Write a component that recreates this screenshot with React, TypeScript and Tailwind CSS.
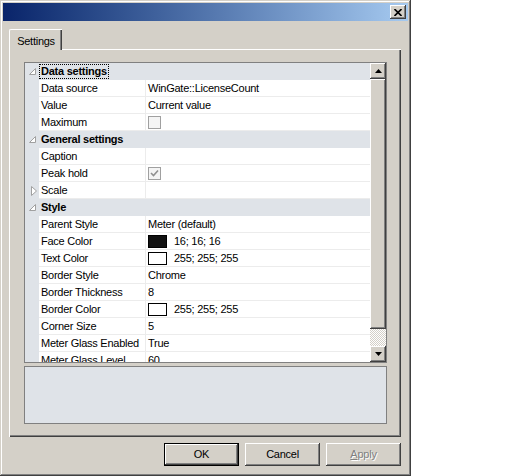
import React from 'react';

type Row =
    | { kind: 'cat'; label: string; focused?: boolean }
    | { kind: 'collapsed'; label: string }
    | { kind: 'prop'; name: string; value?: string; swatch?: string; check?: boolean };

const ROWS: Row[] = [
    { kind: 'cat', label: 'Data settings', focused: true },
    { kind: 'prop', name: 'Data source', value: 'WinGate::LicenseCount' },
    { kind: 'prop', name: 'Value', value: 'Current value' },
    { kind: 'prop', name: 'Maximum', check: false },
    { kind: 'cat', label: 'General settings' },
    { kind: 'prop', name: 'Caption', value: '' },
    { kind: 'prop', name: 'Peak hold', check: true },
    { kind: 'collapsed', label: 'Scale' },
    { kind: 'cat', label: 'Style' },
    { kind: 'prop', name: 'Parent Style', value: 'Meter (default)' },
    { kind: 'prop', name: 'Face Color', value: '16; 16; 16', swatch: '#101010' },
    { kind: 'prop', name: 'Text Color', value: '255; 255; 255', swatch: '#ffffff' },
    { kind: 'prop', name: 'Border Style', value: 'Chrome' },
    { kind: 'prop', name: 'Border Thickness', value: '8' },
    { kind: 'prop', name: 'Border Color', value: '255; 255; 255', swatch: '#ffffff' },
    { kind: 'prop', name: 'Corner Size', value: '5' },
    { kind: 'prop', name: 'Meter Glass Enabled', value: 'True' },
    { kind: 'prop', name: 'Meter Glass Level', value: '60' },
];

// classic win2k raised edge
const raised =
    'shadow-[inset_-1px_-1px_#404040,inset_1px_1px_#ffffff,inset_-2px_-2px_#808080,inset_2px_2px_#d4d0c8]';

const ExpandedGlyph = () => (
    <svg width="7" height="7" viewBox="0 0 7 7" className="ml-[4px]">
        <path d="M6.5 0.5 L6.5 6.5 L0.5 6.5 Z" fill="white" stroke="#a0a0a0" strokeWidth="1" />
    </svg>
);

const CollapsedGlyph = () => (
    <svg width="6" height="10" viewBox="0 0 6 10" className="ml-[6px]">
        <path d="M0.5 0.5 L5.5 5 L0.5 9.5 Z" fill="white" stroke="#a0a0a0" strokeWidth="1" />
    </svg>
);

const Checkbox = ({ checked }: { checked: boolean }) => (
    <div className="w-[13px] h-[13px] border border-[#a0a0a0] bg-[#f4f4f4] flex items-center justify-center">
        {checked && (
            <svg width="9" height="9" viewBox="0 0 9 9">
                <path d="M1 4 L3.5 6.5 L8 1.5" fill="none" stroke="#909090" strokeWidth="1.6" />
            </svg>
        )}
    </div>
);

const GridRow = ({ row }: { row: Row }) => {
    if (row.kind === 'cat' || row.kind === 'collapsed') {
        const isCat = row.kind === 'cat';
        return (
            <div className={`flex h-[17px] shrink-0 ${isCat ? 'bg-[#dfe3e8]' : 'bg-white'}`}>
                <div className="w-[14px] shrink-0 bg-[#dfe3e8] flex items-center">
                    {isCat ? <ExpandedGlyph /> : <CollapsedGlyph />}
                </div>
                {isCat ? (
                    <div className="flex items-center">
                        <span
                            className={`px-[2px] leading-[15px] font-bold ${
                                row.focused ? 'outline outline-1 outline-dotted outline-black -outline-offset-1' : ''
                            }`}
                        >
                            {row.label}
                        </span>
                    </div>
                ) : (
                    <>
                        <div className="w-[107px] shrink-0 border-r border-b border-[#ececec] pl-[2px] leading-[16px]">
                            {row.label}
                        </div>
                        <div className="flex-1 border-b border-[#ececec]" />
                    </>
                )}
            </div>
        );
    }
    return (
        <div className="flex h-[17px] shrink-0 bg-white">
            <div className="w-[14px] shrink-0 bg-[#dfe3e8]" />
            <div className="w-[107px] shrink-0 border-r border-b border-[#ececec] pl-[2px] leading-[16px] whitespace-nowrap overflow-hidden">
                {row.name}
            </div>
            <div className="flex-1 border-b border-[#ececec] pl-[2px] flex items-center gap-[7px] whitespace-nowrap">
                {row.check !== undefined && <Checkbox checked={row.check} />}
                {row.swatch && (
                    <div className="w-[19px] h-[13px] border border-black" style={{ backgroundColor: row.swatch }} />
                )}
                {row.value && <span className="leading-[16px]">{row.value}</span>}
            </div>
        </div>
    );
};

const Arrow = ({ up }: { up: boolean }) => (
    <svg width="7" height="4" viewBox="0 0 7 4">
        <path d={up ? 'M3.5 0 L7 4 L0 4 Z' : 'M0 0 L7 0 L3.5 4 Z'} fill="black" />
    </svg>
);

const Scrollbar = () => (
    <div className="w-[16px] shrink-0 flex flex-col">
        <div className={`h-[16px] bg-[#d4d0c8] flex items-center justify-center ${raised}`}>
            <Arrow up />
        </div>
        <div className={`h-[250px] bg-[#d4d0c8] ${raised}`} />
        <div className="flex-1 bg-[repeating-conic-gradient(#d4d0c8_0%_25%,#ffffff_0%_50%)] bg-[length:2px_2px]" />
        <div className={`h-[16px] bg-[#d4d0c8] flex items-center justify-center ${raised}`}>
            <Arrow up={false} />
        </div>
    </div>
);

const DialogButton = ({ label, isDefault, disabled }: { label: React.ReactNode; isDefault?: boolean; disabled?: boolean }) => (
    <div className={`w-[75px] h-[23px] ${isDefault ? 'border border-black' : ''}`}>
        <div
            className={`w-full h-full bg-[#d4d0c8] flex items-center justify-center ${raised} ${
                disabled ? 'text-[#808080] [text-shadow:1px_1px_#ffffff]' : 'text-black'
            }`}
        >
            {label}
        </div>
    </div>
);

export default function App() {
    return (
        <div className="w-[512px] h-[476px] bg-white font-['Liberation_Sans',Arial,sans-serif] text-[11px] tracking-[-0.25px] text-black">
            <div className="w-[411px] h-[476px] bg-[#d4d0c8] p-[3px] flex flex-col shadow-[inset_-1px_-1px_#404040,inset_1px_1px_#d4d0c8,inset_-2px_-2px_#808080,inset_2px_2px_#ffffff]">
                {/* title bar */}
                <div className="h-[18px] shrink-0 bg-gradient-to-r from-[#0a246a] to-[#a6caf0] flex items-center justify-end pr-[2px]">
                    <div className={`w-[16px] h-[14px] bg-[#d4d0c8] flex items-center justify-center ${raised}`}>
                        <svg width="8" height="7" viewBox="0 0 8 7">
                            <path d="M0.5 0 L7.5 7 M7.5 0 L0.5 7" stroke="black" strokeWidth="1.6" />
                        </svg>
                    </div>
                </div>

                {/* tabs */}
                <div className="ml-[6px] mt-[8px] flex">
                    <div className="relative z-10 -mb-px w-[53px] h-[21px] bg-[#d4d0c8] border-l border-t border-white rounded-tl-[2px] shadow-[inset_-1px_0_#404040,inset_-2px_0_#808080] flex justify-center pt-[3px]">
                        Settings
                    </div>
                </div>
                <div className="ml-[6px] w-[392px] h-[388px] pt-[13px] pl-[15px] shadow-[inset_1px_1px_#ffffff,inset_-1px_-1px_#404040,inset_-2px_-2px_#808080]">
                    <div className="w-[363px] h-[301px] border border-[#808080] bg-white flex overflow-hidden">
                        <div className="w-[345px] flex flex-col overflow-hidden">
                            {ROWS.map((r, i) => (
                                <GridRow key={i} row={r} />
                            ))}
                        </div>
                        <Scrollbar />
                    </div>
                    <div className="mt-[3px] w-[363px] h-[58px] border border-[#808080] bg-[#dfe3e8]" />
                </div>

                {/* buttons */}
                <div className="ml-[6px] w-[392px] mt-[6px] flex justify-end gap-[6px]">
                    <DialogButton label="OK" isDefault />
                    <DialogButton label="Cancel" />
                    <DialogButton
                        label={
                            <span>
                                <span className="underline">A</span>pply
                            </span>
                        }
                        disabled
                    />
                </div>
            </div>
        </div>
    );
}
